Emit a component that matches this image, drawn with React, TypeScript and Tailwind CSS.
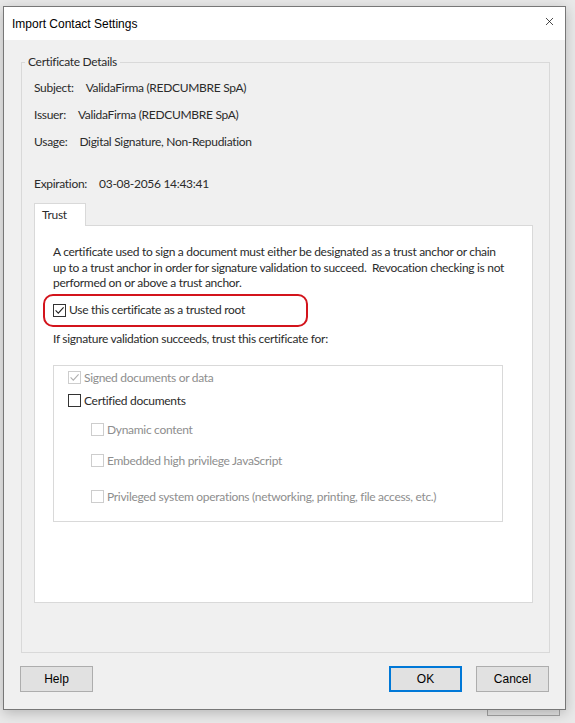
import { X } from "lucide-react";

type BoxProps = { checked?: boolean; disabled?: boolean };

const CheckBox = ({ checked = false, disabled = false }: BoxProps) => (
  <span
    className={`flex h-[13px] w-[13px] shrink-0 items-center justify-center border bg-white ${
      disabled ? "border-[#cdcdcd]" : "border-[#333333]"
    }`}
  >
    {checked && (
      <svg width="11" height="11" viewBox="0 0 11 11" fill="none">
        <path
          d="M1.6 5.4 L4.3 8.2 L9.6 2.4"
          stroke={disabled ? "#b0b0b0" : "#222222"}
          strokeWidth="1.1"
        />
      </svg>
    )}
  </span>
);

type OptionProps = BoxProps & { label: string; className?: string };

const Option = ({ label, checked, disabled, className = "" }: OptionProps) => (
  <div className={`flex h-[16px] items-center gap-[3px] ${className}`}>
    <CheckBox checked={checked} disabled={disabled} />
    <span className={disabled ? "text-[#8e8e8e]" : "text-[#2b2b2b]"}>{label}</span>
  </div>
);

const DetailRow = ({ label, value }: { label: string; value: string }) => (
  <div className="flex h-[16px] items-center gap-[12px]">
    <span>{label}</span>
    <span>{value}</span>
  </div>
);

const DialogButton = ({ label, primary = false, className = "" }: { label: string; primary?: boolean; className?: string }) => (
  <button
    type="button"
    className={`h-[26px] w-[73px] bg-[#e1e1e1] font-['Liberation_Sans',Arial,sans-serif] text-[12px] tracking-normal text-black ${
      primary ? "border-2 border-[#0078d7]" : "border border-[#adadad]"
    } ${className}`}
  >
    {label}
  </button>
);

export default function App() {
  return (
    <div className="relative h-[723px] w-[575px] overflow-hidden bg-[#e9e9e9] pl-[3px] pt-[6px]">
      {/* window behind the dialog */}
      <div className="absolute left-[487px] top-[690px] h-[26px] w-[73px] border border-[#a3a3a3] bg-[#e2e2e2]" />

      <div className="relative z-10 flex h-[704px] w-[563px] flex-col border border-[#777777] bg-[#f0f0f0] shadow-[0_3px_12px_rgba(0,0,0,0.22)]">
        {/* Title bar */}
        <div className="flex h-[33px] items-center justify-between bg-white pl-[8px] pr-[9px]">
          <span className="font-['Liberation_Sans',Arial,sans-serif] text-[12px] text-black">
            Import Contact Settings
          </span>
          <X className="-mt-[4px] h-[13px] w-[13px] text-black" strokeWidth={1.3} />
        </div>

        {/* Body */}
        <div className="flex flex-1 flex-col pl-[17px] pr-[16px] pt-[14px] font-[Lato,sans-serif] text-[12px] tracking-[-0.3px] text-[#2b2b2b]">
          <fieldset className="w-[529px] border border-[#d9d9d9] pb-[49px]">
            <legend className="ml-[3px] px-[3px] leading-[16px]">Certificate Details</legend>

            <div className="pl-[12px]">
              <div className="mt-[10px] flex flex-col gap-[11px]">
                <DetailRow label="Subject:" value="ValidaFirma (REDCUMBRE SpA)" />
                <DetailRow label="Issuer:" value="ValidaFirma (REDCUMBRE SpA)" />
                <DetailRow label="Usage:" value="Digital Signature, Non-Repudiation" />
              </div>
              <div className="mt-[26px]">
                <DetailRow label="Expiration:" value="03-08-2056 14:43:41" />
              </div>

              {/* Tab */}
              <div className="relative z-10 -mb-px mt-[11px] flex h-[23px] w-[52px] items-center border border-b-0 border-[#d9d9d9] bg-white pl-[7px]">
                Trust
              </div>
              <div className="h-[378px] w-[499px] border border-[#d9d9d9] bg-white pl-[18px] pt-[18px]">
                <p className="whitespace-nowrap leading-[15.5px]">
                  A certificate used to sign a document must either be designated as a trust anchor or chain
                  <br />
                  up to a trust anchor in order for signature validation to succeed.{"\u00a0 "}Revocation checking is not
                  <br />
                  performed on or above a trust anchor.
                </p>

                <div className="-ml-[10px] mt-[3px] flex h-[33px] w-[265px] items-center rounded-[10px] border-[2.5px] border-[#d3141c] pl-[8px]">
                  <Option label="Use this certificate as a trusted root" checked />
                </div>

                <p className="mt-[4px] leading-[16px]">If signature validation succeeds, trust this certificate for:</p>

                <div className="mt-[18px] w-[450px] border border-[#d9d9d9] pb-[16px] pl-[14px] pt-[4px]">
                  <Option label="Signed documents or data" checked disabled />
                  <Option label="Certified documents" className="mt-[7px]" />
                  <div className="ml-[23px]">
                    <Option label="Dynamic content" disabled className="mt-[13px]" />
                    <Option label="Embedded high privilege JavaScript" disabled className="mt-[15px]" />
                    <Option
                      label="Privileged system operations (networking, printing, file access, etc.)"
                      disabled
                      className="mt-[20px]"
                    />
                  </div>
                </div>
              </div>
            </div>
          </fieldset>

          {/* Buttons */}
          <div className="mt-[13px] flex items-center">
            <DialogButton label="Help" className="-ml-px" />
            <div className="ml-auto flex gap-[14px]">
              <DialogButton label="OK" primary />
              <DialogButton label="Cancel" />
            </div>
          </div>
        </div>
      </div>
    </div>
  );
}
